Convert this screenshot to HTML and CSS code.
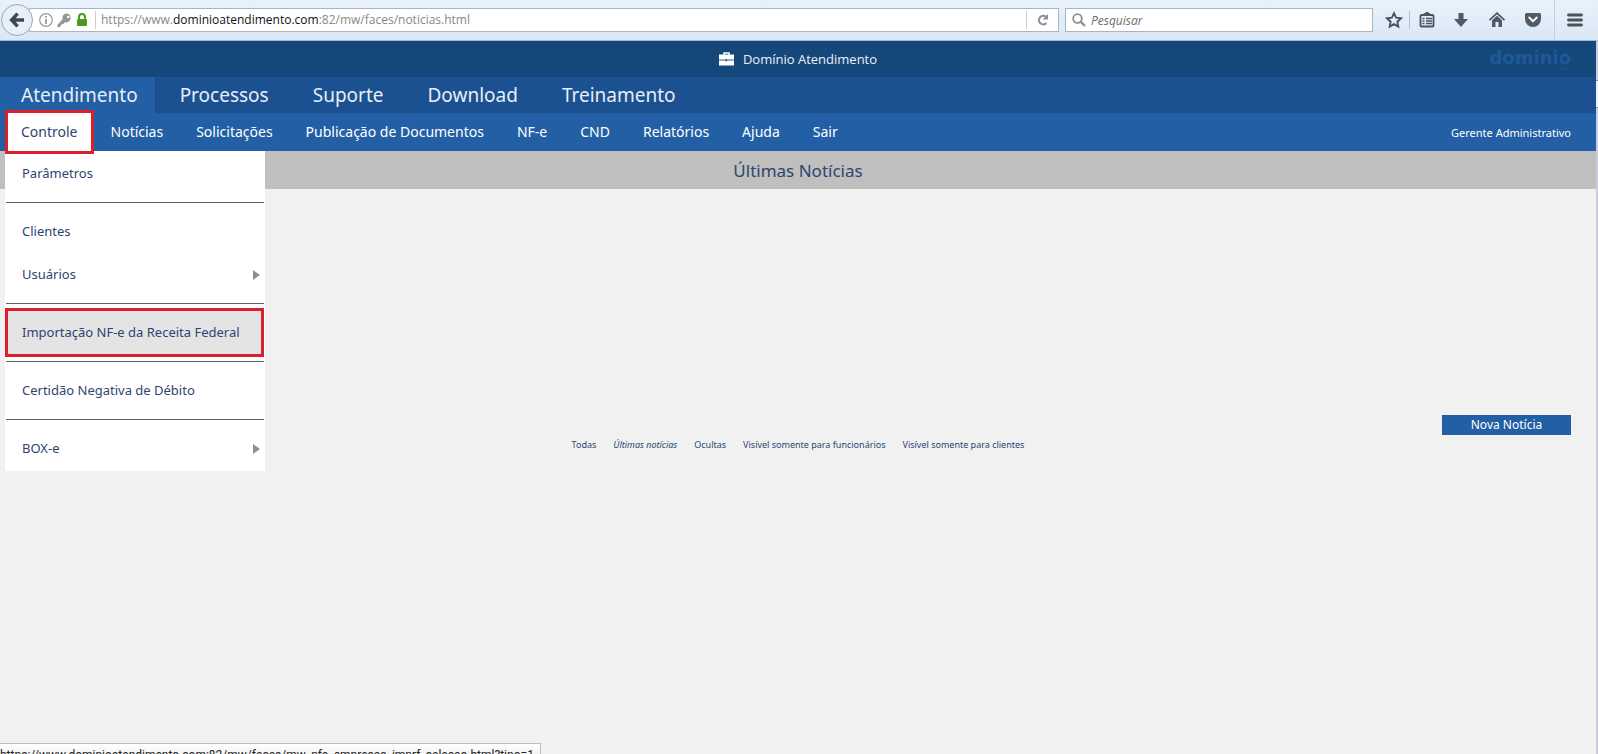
FILE: index.html
```html
<!DOCTYPE html>
<html lang="pt-BR">
<head>
<meta charset="utf-8">
<meta name="viewport" content="width=device-width, initial-scale=1">
<title>Domínio Atendimento</title>
<link rel="stylesheet" href="styles.css">
</head>
<body>
<div class="browser-bar">
  <button class="back" type="button" aria-label="Voltar">
    <svg width="16" height="16" viewBox="0 0 16 16" fill="none" stroke="#3f464d" stroke-width="3.4"><path d="M8.6 1.6 2.6 8l6 6.400M3 8h12"/></svg>
  </button>
  <div class="address">
    <svg width="14" height="14" viewBox="0 0 14 14" fill="none" stroke="#999"><circle cx="7" cy="7" r="6.300" stroke-width="1.200"/><path d="M7 3v1.800M7 6v5" stroke-width="1.800"/></svg>
    <svg width="15" height="15" viewBox="0 0 15 15"><path fill="#969696" fill-rule="evenodd" d="M9.800.5a4.400 4.400 0 0 0-4.200 5.700L.5 11.800v2.400h2.600v-1.600h1.600V11h1.500l1.800-1.700A4.500 4.500 0 1 0 9.800.5Zm1.500 2.200a1.300 1.300 0 1 1 0 2.600 1.300 1.300 0 0 1 0-2.600Z"/></svg>
    <svg width="12" height="14" viewBox="0 0 12 14"><path d="M3 7V4a3 3 0 0 1 6 0v3" fill="none" stroke="#4a9a1f" stroke-width="2"/><rect x="1" y="6" width="10" height="7" rx="1" fill="#4a9a1f"/></svg>
    <span class="url"><span>https://www.</span><b>dominioatendimento.com</b><span>:82/mw/faces/noticias.html</span></span>
    <button class="reload" type="button" aria-label="Recarregar">
      <svg width="14" height="14" viewBox="0 0 14 14"><path d="M10.500 10a4.300 4.300 0 1 1-.3-6" fill="none" stroke="#8b929b" stroke-width="2"/><path d="M12 1v5.500H6.600Z" fill="#8b929b"/></svg>
    </button>
  </div>
  <label class="search">
    <svg width="14" height="14" viewBox="0 0 14 14" fill="none" stroke="#8f8f8f"><circle cx="5.500" cy="5.500" r="4.300" stroke-width="1.800"/><path d="m8.500 8.500 4.500 4.500" stroke-width="2.400"/></svg>
    <input type="text" placeholder="Pesquisar" aria-label="Pesquisar">
  </label>
  <div class="tools">
    <button class="star" type="button" aria-label="Favoritar"><svg width="18" height="18" viewBox="0 0 18 18"><path d="m9 2.200 2.100 4.500 4.900.6-3.600 3.400.9 4.900L9 13.200l-4.300 2.400.9-4.900L2 7.300l4.900-.6Z" fill="none" stroke="#4a525a" stroke-width="1.900"/></svg></button>
    <button class="split" type="button" aria-label="Lista de favoritos"><svg width="18" height="18" viewBox="0 0 18 18" fill="none" stroke="#4a525a"><rect x="2.500" y="4" width="13" height="11.500" rx="1" stroke-width="1.800"/><path d="M6 3.500 9 1.800l3 1.700" stroke-width="2"/><path d="M4.500 7.500h2M8 7.500h6M4.500 10h2M8 10h6M4.500 12.500h2M8 12.500h6" stroke-width="1.300"/></svg></button>
    <button type="button" aria-label="Downloads"><svg width="18" height="18" viewBox="0 0 18 18"><path d="M6.500 2h5v6H16l-7 8-7-8h4.500Z" fill="#525a63"/></svg></button>
    <button type="button" aria-label="Página inicial"><svg width="18" height="18" viewBox="0 0 18 18"><path d="m1.500 9.200 7.500-7 7.500 7" fill="none" stroke="#4a525a" stroke-width="1.600"/><path d="M4 9.200 9 4.700l5 4.500V16h-3.500v-5h-3v5H4Z" fill="#525a63"/></svg></button>
    <button type="button" aria-label="Pocket"><svg width="18" height="18" viewBox="0 0 18 18"><path d="M2.500 2h13Q17 2 17 3.500V8A8 8 0 0 1 1 8V3.500Q1 2 2.500 2Z" fill="#525a63"/><path d="m5.200 6.500 3.800 3.700 3.800-3.700" fill="none" stroke="#fff" stroke-width="1.900" stroke-linecap="round"/></svg></button>
  </div>
  <button class="menu-btn" type="button" aria-label="Abrir menu"><svg width="16" height="14" viewBox="0 0 16 14" stroke="#4a525a" stroke-width="2.800" stroke-linecap="round"><path d="M1.500 2h13M1.500 7h13M1.500 12h13"/></svg></button>
</div>

<div class="page">
  <div class="site">
    <header class="brand-bar">
      <div class="brand">
        <svg width="15" height="14" viewBox="0 0 15 14"><path d="M5 3V1h5v2" fill="none" stroke="#fff" stroke-width="1.400"/><path d="M0 2.500h15v5H0ZM0 8.500h15v5H0Z" fill="#fff"/><path d="M0 8h15" stroke="#9db5cf"/><rect x="6.500" y="7.500" width="1.500" height="1.800" fill="#16477b"/></svg>
        <h1>Domínio Atendimento</h1>
      </div>
      <div class="logo"><strong>dominio</strong><small>sistemas</small></div>
    </header>
    <nav class="tabs" aria-label="Módulos">
      <a class="active" href="#">Atendimento</a><a href="#">Processos</a><a href="#">Suporte</a><a href="#">Download</a><a href="#">Treinamento</a>
    </nav>
    <nav class="subnav" aria-label="Atendimento">
      <a class="current" href="#">Controle</a><a href="#">Notícias</a><a href="#">Solicitações</a><a href="#">Publicação de Documentos</a><a href="#">NF-e</a><a href="#">CND</a><a href="#">Relatórios</a><a href="#">Ajuda</a><a href="#">Sair</a>
      <span class="user">Gerente Administrativo</span>
      <div class="dropdown">
        <a href="#">Parâmetros</a>
        <hr>
        <a href="#">Clientes</a>
        <a class="has-sub" href="#">Usuários</a>
        <hr>
        <a class="selected" href="#">Importação NF-e da Receita Federal</a>
        <hr>
        <a href="#">Certidão Negativa de Débito</a>
        <hr>
        <a class="has-sub" href="#">BOX-e</a>
      </div>
    </nav>
    <main>
      <h2>Últimas Notícias</h2>
      <div class="news">
        <button class="new" type="button">Nova Notícia</button>
        <div class="filters">
          <a href="#">Todas</a><a class="on" href="#">Últimas notícias</a><a href="#">Ocultas</a><a href="#">Visível somente para funcionários</a><a href="#">Visível somente para clientes</a>
        </div>
      </div>
    </main>
  </div>
  <div class="rail"><div class="thumb"></div></div>
</div>
<div class="status">https://www.dominioatendimento.com:82/mw/faces/mw_nfe_empresas_imprf_selecao.html?tipo=1</div>
</body>
</html>
```

FILE: styles.css
```css
* { box-sizing: border-box; }
body {
  margin: 0;
  min-height: 100vh;
  display: flex;
  flex-direction: column;
  overflow: hidden;
  background: #f1f1f1;
  font-family: "Noto Sans", "Open Sans", sans-serif;
  font-size: 13px;
}
a { color: inherit; text-decoration: none; }
button { border: 0; padding: 0; background: none; font: inherit; cursor: pointer; }
svg { display: block; flex: none; }

/* Browser toolbar */
.browser-bar {
  display: flex;
  align-items: center;
  height: 41px;
  padding-left: 1px;
  background: linear-gradient(#e9f2fb, #d9e8f7);
  border-bottom: 1px solid #9db9d6;
}
.back {
  display: grid;
  place-items: center;
  width: 32px;
  height: 32px;
  border: 1px solid #9ba8b6;
  border-radius: 50%;
  background: #e6effa;
  z-index: 1;
}
.address, .search {
  display: flex;
  align-items: center;
  height: 24px;
  border: 1px solid #a9b5c2;
  background: #fff;
}
.address { flex: 1; margin-left: -4px; padding-left: 9px; gap: 4px; }
.url {
  flex: 1;
  height: 18px;
  margin-left: 3px;
  padding-left: 5px;
  border-left: 1px solid #ccc;
  color: #888;
  font-family: "Open Sans", sans-serif;
  font-size: 12px;
  line-height: 18px;
  white-space: nowrap;
}
.url b { color: #111; font-weight: 400; }
.reload { display: grid; place-items: center; width: 32px; height: 18px; border-left: 1px solid #ccc; }
.search { width: 308px; margin-left: 6px; padding-left: 6px; gap: 5px; }
.search input {
  flex: 1;
  min-width: 0;
  padding: 0;
  border: 0;
  outline: 0;
  background: none;
  font: italic 12px "Open Sans", sans-serif;
}
.search input::placeholder { color: #6c6c6c; opacity: 1; }
.tools { display: flex; padding: 0 3px 0 6px; }
.tools button { display: grid; place-items: center; width: 36px; height: 18px; }
.tools .star { width: 30px; }
.tools .split { border-left: 1px solid #b4c0cd; width: 34px; }
.menu-btn { display: grid; place-items: center; align-self: stretch; width: 44px; padding-right: 4px; border-left: 1px solid #c3cfdc; }

/* Site */
.page { display: flex; flex: 1; }
.site { flex: 1; }
.brand-bar {
  display: grid;
  grid-template-columns: 1fr auto 1fr;
  height: 36px;
  background: #16477b;
}
.brand { grid-column: 2; display: flex; align-items: center; gap: 9px; color: #eaf1f8; }
.brand h1 { margin: 0; font-family: "Open Sans", sans-serif; font-size: 13px; font-weight: 400; line-height: 18px; }
.logo {
  justify-self: end;
  display: flex;
  flex-direction: column;
  align-items: flex-end;
  padding: 8px 25px 0 0;
  color: #1f5898;
}
.logo strong { font: 700 18px/18px "DejaVu Sans", sans-serif; }
.logo small { font-size: 4px; line-height: 4px; }
.tabs { display: flex; height: 36px; background: #1b5190; color: #e6eef7; font-size: 19px; line-height: 36px; }
.tabs a { padding: 0 19px 0 25px; }
.tabs .active { padding: 0 17px 0 21px; background: #225fa5; }
.subnav {
  position: relative;
  display: flex;
  height: 38px;
  padding-left: 5px;
  background: #225fa5;
  color: #fff;
  font-size: 14px;
  line-height: 37px;
}
.subnav > a { padding: 0 16px 0 17px; }
.subnav > .current { margin: -3px 0; padding: 0 13px; border: 3px solid #d9202c; background: #fff; color: #2f4470; z-index: 2; }
.user { margin-left: auto; padding-right: 25px; font-size: 11px; line-height: 40px; }
.dropdown {
  position: absolute;
  top: 38px;
  left: 5px;
  width: 260px;
  padding: 1px 0;
  background: #fff;
  color: #2f4470;
  font-size: 13px;
  line-height: 43px;
  z-index: 1;
}
.dropdown a { display: flex; align-items: center; justify-content: space-between; height: 43px; margin: 0 4px 0 3px; padding-left: 14px; }
.dropdown hr { height: 1px; margin: 7px 1px; border: 0; background: #5f5f5f; }
.dropdown .has-sub::after { content: ""; margin-right: 1px; border: solid transparent; border-width: 5px 0 5px 7px; border-left-color: #8f8f8f; }
.dropdown .selected { background: #e4e4e4; outline: 3px solid #d9202c; }
h2 {
  margin: 0;
  height: 38px;
  background: #bfbfbf;
  color: #2f4470;
  font-size: 17px;
  font-weight: 400;
  line-height: 39px;
  text-align: center;
}
.news { display: flex; flex-direction: column; padding: 226px 25px 0; }
.new { align-self: flex-end; width: 129px; height: 20px; background: #225fa5; color: #fff; font-size: 12px; line-height: 20px; }
.filters { display: flex; justify-content: center; gap: 17px; color: #2a4672; font-size: 9px; line-height: 20px; }
.filters .on { font-style: italic; }
.rail { width: 2px; background: #c9ccd9; }
.thumb { height: 28px; margin-top: 39px; background: #f1f1f1; border: solid #8a8f98; border-width: 1px 0; }
.status {
  position: fixed;
  left: 0;
  bottom: -10px;
  height: 21px;
  padding-right: 6px;
  border: solid #bfbfbf;
  border-width: 1px 1px 0 0;
  background: linear-gradient(#fff, #e8e8e8);
  color: #222;
  font-family: Roboto, sans-serif;
  font-size: 12px;
  line-height: 22px;
}
```
